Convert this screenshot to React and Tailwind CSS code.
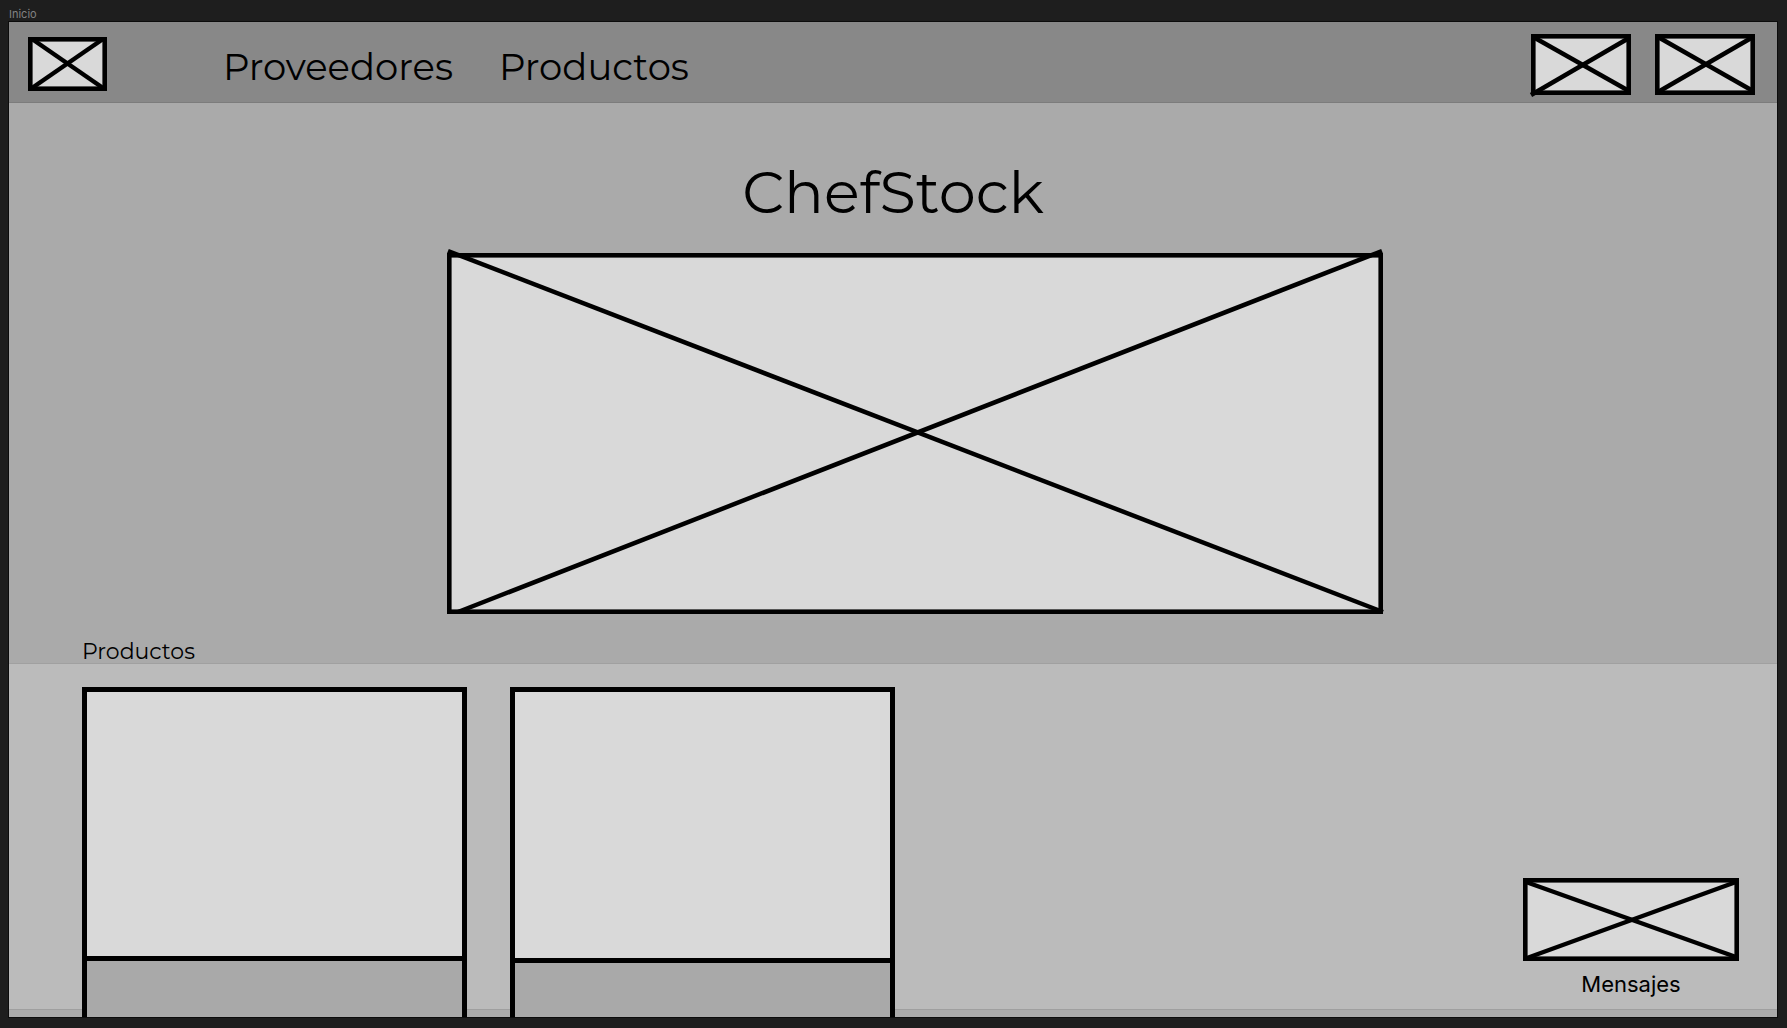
function Placeholder({ className, width, height, lines, stroke = 5 }) {
  return (
    <svg
      viewBox={`0 0 ${width} ${height}`}
      className={`block overflow-visible ${className}`}
      fill="none"
      stroke="#000"
      aria-hidden="true"
    >
      <rect
        x={stroke / 2}
        y={stroke / 2}
        width={width - stroke}
        height={height - stroke}
        fill="#d9d9d9"
        strokeWidth={stroke}
      />
      {lines.map(([x1, y1, x2, y2]) => (
        <line key={`${x1}-${y1}`} x1={x1} y1={y1} x2={x2} y2={y2} strokeWidth="4.5" />
      ))}
    </svg>
  );
}

function ProductCard({ imageClass }) {
  return (
    <article className="flex h-[330px] w-[385px] flex-col border-[5px] border-b-0 border-black bg-[#a9a9a9]">
      <div className={`border-b-[5px] border-black bg-[#d9d9d9] ${imageClass}`} />
    </article>
  );
}

export default function App() {
  return (
    <div className="min-h-screen bg-[#1e1e1e] pr-[10px] pb-[11px] pl-[9px] font-['Montserrat','Inter',sans-serif] text-black">
      <p className="h-[22px] pt-[6px] font-['Inter',sans-serif] text-[11px] leading-4 text-[#828282]">
        Inicio
      </p>
      <div className="bg-[#aaaaaa] shadow-[0_0_0_1px_#0c0c0c]">
        <header className="flex h-[81px] items-start border-b border-[#7c7c7c] bg-[#888888] pr-[22px] pl-[19px]">
          <a href="#inicio" aria-label="Inicio" className="mt-[15px]">
            <Placeholder
              className="w-[79px]"
              width={79}
              height={54}
              stroke={4.6}
              lines={[
                [4, 2, 75, 51],
                [4, 51, 75, 2],
              ]}
            />
          </a>
          <nav className="mt-5 ml-[116px] flex gap-[46px] text-[37px] leading-[50px]">
            <a href="#proveedores">Proveedores</a>
            <a href="#productos">Productos</a>
          </nav>
          <div className="mt-3 ml-auto flex gap-6">
            <button type="button" aria-label="Carrito">
              <Placeholder
                className="w-[100px]"
                width={100}
                height={61}
                stroke={4.6}
                lines={[
                  [4, 4, 98, 57],
                  [0, 61, 98, 4],
                ]}
              />
            </button>
            <button type="button" aria-label="Perfil">
              <Placeholder
                className="w-[100px]"
                width={100}
                height={61}
                stroke={4.6}
                lines={[
                  [3, 3, 98, 57],
                  [3, 58, 98, 3],
                ]}
              />
            </button>
          </div>
        </header>

        <main>
          <section className="flex h-[560px] flex-col items-center">
            <h1 className="mt-[51px] text-[59px] leading-[76px]">ChefStock</h1>
            <div className="mt-[23px] pl-11">
              <Placeholder
                className="w-[936px]"
                width={936}
                height={361}
                stroke={4.6}
                lines={[
                  [1, -2, 936, 359],
                  [11, 359, 935, -2],
                ]}
              />
            </div>
            <h2 className="mt-auto self-start pl-[73px] text-[22px] leading-[22px]">
              Productos
            </h2>
          </section>

          <section
            id="productos"
            className="flex justify-between border-t border-[#a0a0a0] bg-[#bbbbbb] pt-[23px] pr-[38px] pl-[73px]"
          >
            <div className="-mb-2 flex gap-[43px]">
              <ProductCard imageClass="h-[269px]" />
              <ProductCard imageClass="h-[271px]" />
            </div>
            <button
              type="button"
              className="mb-[9px] flex flex-col items-center gap-[7px] self-end font-['Inter',sans-serif] text-[22px] leading-8"
            >
              <Placeholder
                className="w-[216px]"
                width={216}
                height={83}
                stroke={4.6}
                lines={[
                  [3, 4, 213, 79],
                  [4, 80, 213, 4],
                ]}
              />
              Mensajes
            </button>
          </section>
          <div className="h-2 border-t border-[#9f9f9f]" />
        </main>
      </div>
    </div>
  );
}
